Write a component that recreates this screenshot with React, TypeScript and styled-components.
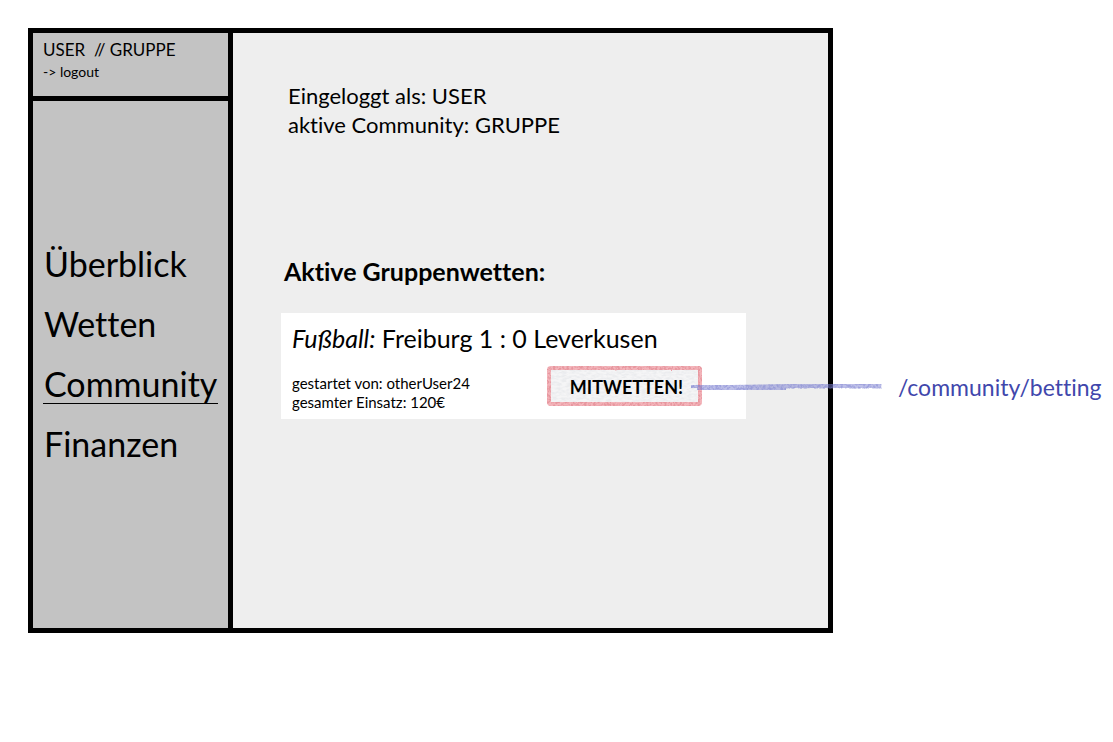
import React from 'react';
import styled, { createGlobalStyle } from 'styled-components';

const GlobalStyle = createGlobalStyle`
  * { box-sizing: border-box; }
  body {
    margin: 0;
    background: #fff;
    color: #000;
    font-family: Lato, Carlito, Calibri, sans-serif;
    font-variant-ligatures: none;
  }
  h1, h2, p, ul { margin: 0; padding: 0; }
`;

const Page = styled.div`
  padding: 28px 280px 28px 28px;
`;

const Frame = styled.div`
  display: grid;
  grid-template-columns: 200px 1fr;
  min-height: 605px;
  border: 5px solid #000;
  background: #eee;
`;

const Sidebar = styled.aside`
  display: flex;
  flex-direction: column;
  border-right: 5px solid #000;
  background: #c3c3c3;
`;

const Account = styled.header`
  height: 68px;
  padding: 5px 10px;
  border-bottom: 5px solid #000;
`;

const AccountName = styled.p`
  font-size: 17px;
  line-height: 24px;
  white-space: nowrap;
`;

const LogoutLink = styled.a`
  display: block;
  font-size: 14px;
  line-height: 20px;
  color: inherit;
  text-decoration: none;
`;

const Nav = styled.nav`
  padding: 142px 10px 24px;
`;

const NavList = styled.ul`
  display: flex;
  flex-direction: column;
  align-items: flex-start;
  gap: 19px;
  list-style: none;
`;

const NavLink = styled.a<{ $active?: boolean }>`
  display: block;
  height: 41px;
  padding: 0 1px;
  border-bottom: 1px solid ${(p) => (p.$active ? '#000' : 'transparent')};
  font-size: 34px;
  line-height: 42px;
  color: inherit;
  text-decoration: none;
`;

const Main = styled.main`
  padding: 48px 82px 48px 48px;
`;

const Session = styled.div`
  padding-left: 7px;
  font-size: 22px;
  line-height: 29px;
`;

const Heading = styled.h1`
  margin-top: 117px;
  padding-left: 3px;
  font-size: 25px;
  line-height: 30px;
`;

const Card = styled.article`
  margin-top: 27px;
  padding: 9px 44px 6px 11px;
  background: #fff;
`;

const CardTitle = styled.h2`
  font-size: 25px;
  line-height: 32px;
  font-weight: 400;
  white-space: nowrap;
`;

const CardBody = styled.div`
  display: flex;
  justify-content: space-between;
  align-items: flex-start;
  padding-top: 12px;
`;

const Meta = styled.div`
  padding-top: 8px;
  padding-bottom: 1px;
  font-size: 15px;
  line-height: 19px;
  white-space: nowrap;
`;

const Action = styled.div`
  position: relative;
`;

const BetButton = styled.button`
  position: relative;
  display: block;
  width: 155px;
  height: 40px;
  padding: 2px 0 0 4px;
  border: 0;
  background: transparent;
  color: #000;
  font-family: inherit;
  font-size: 18px;
  font-weight: 700;
  line-height: 38px;
  cursor: pointer;
`;

const ButtonSketch = styled.svg`
  position: absolute;
  inset: 0;
`;

const ButtonLabel = styled.span`
  position: relative;
`;

const Annotation = styled.div`
  position: absolute;
  top: 6px;
  left: 144px;
  display: flex;
  align-items: center;
  gap: 16px;
  color: #4147ac;
  font-size: 23px;
  line-height: 30px;
  white-space: nowrap;
`;

const navItems = [
  { label: 'Überblick', href: '#ueberblick' },
  { label: 'Wetten', href: '#wetten' },
  { label: 'Community', href: '#community', active: true },
  { label: 'Finanzen', href: '#finanzen' },
];

function CrayonBox() {
  return (
    <ButtonSketch width="155" height="40" viewBox="0 0 155 40" aria-hidden="true">
      <defs>
        <filter id="crayon" x="-5%" y="-10%" width="110%" height="120%" colorInterpolationFilters="sRGB">
          <feTurbulence type="fractalNoise" baseFrequency="0.45" numOctaves="2" seed="4" result="noise" />
          <feDisplacementMap in="SourceGraphic" in2="noise" scale="2" result="rough" />
          <feColorMatrix in="noise" type="matrix" values="0 0 0 0 0  0 0 0 0 0  0 0 0 0 0  4 0 0 0 -1.6" result="grain" />
          <feComposite in="rough" in2="grain" operator="in" />
        </filter>
        <filter id="paper" x="0" y="0" width="100%" height="100%" colorInterpolationFilters="sRGB">
          <feTurbulence type="fractalNoise" baseFrequency="0.2 0.5" numOctaves="2" seed="9" />
          <feColorMatrix type="matrix" values="0 0 0 0 0.92  0 0 0 0 0.925  0 0 0 0 0.935  3 0 0 0 -1.1" />
          <feComposite in2="SourceGraphic" operator="in" />
        </filter>
      </defs>
      <rect x="3" y="3" width="149" height="34" fill="#f5f5f6" />
      <rect x="3" y="3" width="149" height="34" fill="#eee" filter="url(#paper)" />
      <rect x="2" y="2" width="151" height="36" rx="2" fill="none" stroke="#f3b4ba" strokeWidth="4" />
      <rect x="2" y="2" width="151" height="36" rx="2" fill="none" stroke="#e7979f" strokeWidth="4" filter="url(#crayon)" />
    </ButtonSketch>
  );
}

function CrayonLine() {
  return (
    <svg width="191" height="8" viewBox="0 0 191 8" aria-hidden="true">
      <defs>
        <filter id="crayonLine" filterUnits="userSpaceOnUse" x="0" y="0" width="191" height="8" colorInterpolationFilters="sRGB">
          <feTurbulence type="fractalNoise" baseFrequency="0.4" numOctaves="2" seed="7" result="noise" />
          <feDisplacementMap in="SourceGraphic" in2="noise" scale="1" result="rough" />
          <feColorMatrix in="noise" type="matrix" values="0 0 0 0 0  0 0 0 0 0  0 0 0 0 0  4 0 0 0 -1.6" result="grain" />
          <feComposite in="rough" in2="grain" operator="in" />
        </filter>
      </defs>
      <path d="M0 2H40L95 1H190V5H95V7H6V5H0Z" fill="#7b80d2" fillOpacity="0.5" />
      <path d="M0 2H40L95 1H191V6H95V7H6V5H0Z" fill="#7377cc" fillOpacity="0.4" filter="url(#crayonLine)" />
    </svg>
  );
}

export default function App() {
  return (
    <>
      <GlobalStyle />
      <Page>
        <Frame>
          <Sidebar>
            <Account>
              <AccountName>USER&nbsp; // GRUPPE</AccountName>
              <LogoutLink href="#logout">-&gt; logout</LogoutLink>
            </Account>
            <Nav>
              <NavList>
                {navItems.map((item) => (
                  <li key={item.label}>
                    <NavLink href={item.href} $active={item.active} aria-current={item.active ? 'page' : undefined}>
                      {item.label}
                    </NavLink>
                  </li>
                ))}
              </NavList>
            </Nav>
          </Sidebar>
          <Main>
            <Session>
              <p>Eingeloggt als: USER</p>
              <p>aktive Community: GRUPPE</p>
            </Session>
            <Heading>Aktive Gruppenwetten:</Heading>
            <Card>
              <CardTitle>
                <em>Fußball:</em> Freiburg 1 : 0 Leverkusen
              </CardTitle>
              <CardBody>
                <Meta>
                  <p>gestartet von: otherUser24</p>
                  <p>gesamter Einsatz: 120€</p>
                </Meta>
                <Action>
                  <BetButton type="button">
                    <CrayonBox />
                    <ButtonLabel>MITWETTEN!</ButtonLabel>
                  </BetButton>
                  <Annotation>
                    <CrayonLine />
                    <span>/community/betting</span>
                  </Annotation>
                </Action>
              </CardBody>
            </Card>
          </Main>
        </Frame>
      </Page>
    </>
  );
}
